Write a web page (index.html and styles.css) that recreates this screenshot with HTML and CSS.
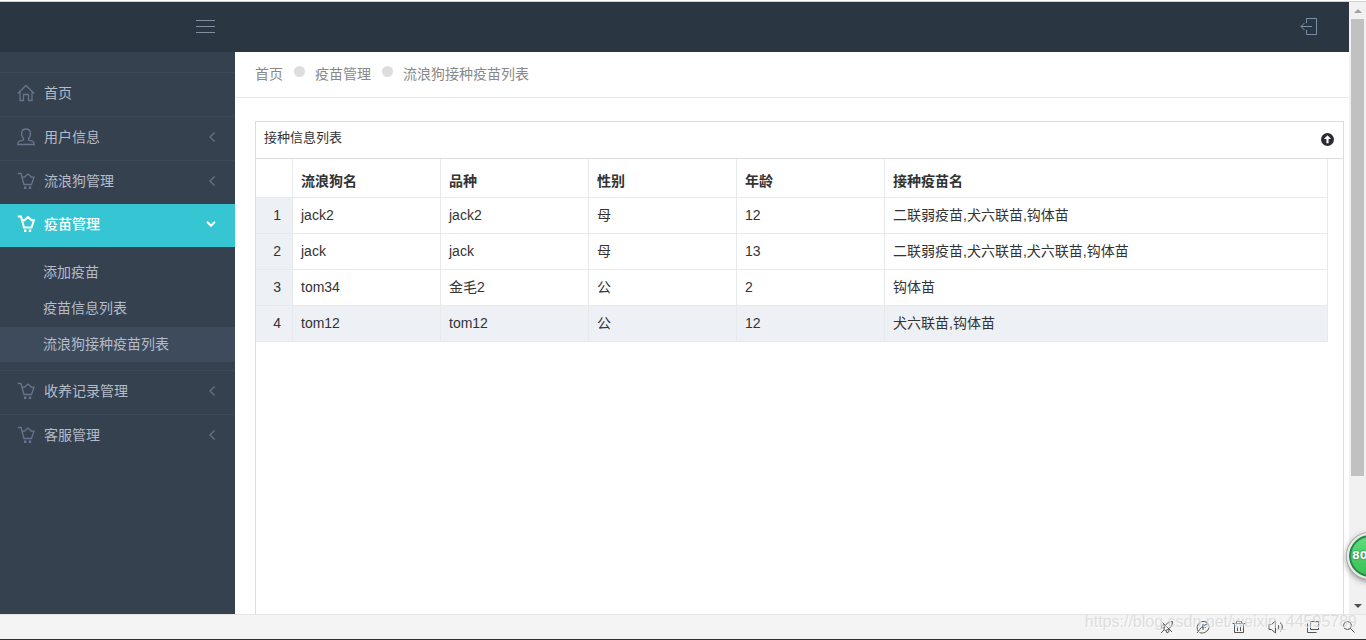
FILE: index.html
```html
<!DOCTYPE html>
<html lang="zh-CN">
<head>
<meta charset="utf-8">
<title>流浪狗接种疫苗列表</title>
<link rel="stylesheet" href="styles.css">
</head>
<body>
<svg class="defs" aria-hidden="true">
  <symbol id="cart" viewBox="0 0 18 18">
    <path d="M.8 1.500h3.200L7 12.500h7.500L17 5.200H13.500M5 5.200h3M7 5.500L11 2l4 3.500"/>
    <path class="wheels" d="M7 14.500h2.400v2.400H7zM11.800 14.500h2.400v2.400h-2.400z"/>
  </symbol>
  <symbol id="chev" viewBox="0 0 6 10"><path d="M5.500 .5L1 5l4.500 4.500"/></symbol>
</svg>
<div class="window">
  <div class="viewport">
    <div class="page">
      <header class="topbar">
        <button class="toggler" type="button" aria-label="菜单"><span></span><span></span><span></span></button>
        <a class="logout" href="#" aria-label="退出">
          <svg viewBox="0 0 18 18"><path d="M6.500 6V1.500h10v16h-10V13M12 9.500H1M4.500 6L1 9.500 4.500 13"/></svg>
        </a>
      </header>
      <div class="columns">
        <nav class="sidebar">
          <ul class="menu">
            <li class="item"><a class="link" href="#"><svg class="icon" viewBox="0 0 18 18"><path d="M.8 9.500L9 1.500l8.200 8M3 8v8.500h3.500v-6h5v6H15V8"/></svg><span>首页</span></a></li>
            <li class="item"><a class="link" href="#"><svg class="icon" viewBox="0 0 18 18"><path d="M6.500 10.500C4.500 8.500 4.500 6 4.700 4.500 5 2.500 6.500 1 9 1s4 1.500 4.300 3.500c.2 1.500.2 4-1.800 6v1.500l4 1.200c1 .5 1.800 1.500 1.800 3.300H.7c0-1.800.8-2.800 1.800-3.300l4-1.200z"/></svg><span>用户信息</span><svg class="arrow"><use href="#chev"/></svg></a></li>
            <li class="item"><a class="link" href="#"><svg class="icon"><use href="#cart"/></svg><span>流浪狗管理</span><svg class="arrow"><use href="#chev"/></svg></a></li>
            <li class="item active"><a class="link" href="#"><svg class="icon"><use href="#cart"/></svg><span>疫苗管理</span><svg class="arrow-down" viewBox="0 0 10 6"><path d="M1 .8l4 4 4-4"/></svg></a>
              <ul class="submenu">
                <li><a class="sublink" href="#">添加疫苗</a></li>
                <li><a class="sublink" href="#">疫苗信息列表</a></li>
                <li><a class="sublink current" href="#">流浪狗接种疫苗列表</a></li>
              </ul>
            </li>
            <li class="item"><a class="link" href="#"><svg class="icon"><use href="#cart"/></svg><span>收养记录管理</span><svg class="arrow"><use href="#chev"/></svg></a></li>
            <li class="item"><a class="link" href="#"><svg class="icon"><use href="#cart"/></svg><span>客服管理</span><svg class="arrow"><use href="#chev"/></svg></a></li>
          </ul>
        </nav>
        <main class="content">
          <div class="crumbs"><a href="#">首页</a><i class="dot"></i><a href="#">疫苗管理</a><i class="dot"></i><a href="#">流浪狗接种疫苗列表</a></div>
          <section class="panel">
            <div class="panel-head">
              <h1 class="panel-title">接种信息列表</h1>
              <button class="collapse" type="button" aria-label="收起"><svg viewBox="0 0 12 12"><circle cx="6" cy="6" r="6"/><path d="M6 2L9.300 5.500H7V9.500H5V5.500H2.700z"/></svg></button>
            </div>
            <div class="grid-wrap">
              <table class="grid">
                <colgroup><col class="c-num"><col class="c-std"><col class="c-std"><col class="c-std"><col class="c-std"><col></colgroup>
                <thead><tr><th></th><th>流浪狗名</th><th>品种</th><th>性别</th><th>年龄</th><th>接种疫苗名</th></tr></thead>
                <tbody>
                  <tr><td class="num">1</td><td>jack2</td><td>jack2</td><td>母</td><td>12</td><td>二联弱疫苗,犬六联苗,钩体苗</td></tr>
                  <tr><td class="num">2</td><td>jack</td><td>jack</td><td>母</td><td>13</td><td>二联弱疫苗,犬六联苗,犬六联苗,钩体苗</td></tr>
                  <tr><td class="num">3</td><td>tom34</td><td>金毛2</td><td>公</td><td>2</td><td>钩体苗</td></tr>
                  <tr class="hover"><td class="num">4</td><td>tom12</td><td>tom12</td><td>公</td><td>12</td><td>犬六联苗,钩体苗</td></tr>
                </tbody>
              </table>
            </div>
          </section>
        </main>
      </div>
    </div>
    <div class="scrollbar">
      <button class="sb-btn" type="button" aria-label="向上滚动"><svg viewBox="0 0 8 4"><path class="up" d="M0 4l4-4 4 4z"/></svg></button>
      <div class="track"><div class="thumb"></div></div>
      <button class="sb-btn" type="button" aria-label="向下滚动"><svg viewBox="0 0 8 4"><path class="down" d="M0 0h8L4 4z"/></svg></button>
    </div>
  </div>
  <footer class="statusbar">
    <button type="button" aria-label="加速"><svg viewBox="0 0 14 14"><path d="M4 9.500C4 6 7 2 12.500 1.500c0 4-3 8-7 9zM5 5H2L1.500 8 4 7.500M9 9v2.500l-2 1.500-1-2.500M2 2l10 10M4 10l-3 3"/></svg></button>
    <button type="button" aria-label="浏览"><svg viewBox="0 0 14 14"><path d="M2 11C0 7 2 2 7 1.500S14 6 12.500 9 7 14 3.500 12.500M1 13c2-2 3-5 6-7l4-2M7 4v6M4.500 7.500H10"/></svg></button>
    <button type="button" aria-label="清理"><svg viewBox="0 0 14 14"><path d="M.5 3.500h13M4.500 3V1.500h5V3M2.500 4v8.500h9V4M5.500 6.500V11M8.500 6.500V11"/></svg></button>
    <button type="button" aria-label="声音"><svg class="wide" viewBox="0 0 16 14"><path d="M1 4.500h2.500l4-3.500v12l-4-3.500H1zM10 5c1 1 1 3 0 4M12 2.500c3 2 3 7 0 9"/></svg></button>
    <button type="button" aria-label="窗口"><svg viewBox="0 0 14 14"><path d="M4.500 1.500h8v8h-8zM1.500 3.500v9h9"/></svg></button>
    <button type="button" aria-label="缩放"><svg viewBox="0 0 14 14"><circle cx="5.500" cy="5.500" r="4"/><path d="M8.500 8.500l4 4"/></svg></button>
    <span class="watermark">https://blog.csdn.net/weixin_44595789</span>
  </footer>
  <div class="ball">80</div>
</div>
</body>
</html>
```
FILE: styles.css
```css
* { box-sizing: border-box; }
body {
  margin: 0;
  font: 14px/20px "Liberation Sans", "Noto Sans CJK SC", sans-serif;
  color: #333;
  background: #fff;
}
ul { margin: 0; padding: 0; list-style: none; }
a { text-decoration: none; color: inherit; }
button { margin: 0; padding: 0; border: 0; background: none; }
svg { fill: none; stroke: currentColor; display: block; }
.defs { display: none; }

.window {
  position: relative;
  display: flex;
  flex-direction: column;
  height: 100vh;
  overflow: hidden;
  padding-top: 1px;
}
.viewport { flex: 1; display: flex; min-height: 0; border-top: 1px solid #ccd2d4; }
.page { flex: 1; min-width: 0; display: flex; flex-direction: column; }

.topbar {
  flex: none;
  height: 50px;
  display: flex;
  justify-content: space-between;
  align-items: center;
  padding: 0 31px 2px 196px;
  background: #2b3643;
}
.toggler { width: 19px; display: flex; flex-direction: column; gap: 5px; }
.toggler span { height: 1px; background: #828fa3; }
.logout { color: #7d8fa5; }
.logout svg { width: 18px; height: 18px; }

.columns { flex: 1; display: flex; min-height: 0; }
.sidebar { flex: none; width: 235px; padding-top: 20px; background: #364150; color: #b4bcc8; }
.item { border-top: 1px solid #3d4957; }
.link { display: flex; align-items: center; gap: 9px; height: 43px; padding: 0 20px 3px 17px; }
.icon { width: 18px; height: 18px; color: #67748a; stroke-width: 1.3; }
.wheels { fill: currentColor; stroke: none; }
.arrow { width: 6px; height: 10px; margin-left: auto; color: #67748a; stroke-width: 1.2; }
.arrow-down { width: 10px; height: 6px; margin-left: auto; stroke-width: 2; }
.active { border-top: 0; }
.active > .link { background: #36c6d3; color: #fff; padding-right: 19px; font-weight: 500; }
.active .icon { color: #fff; stroke-width: 2; }
.submenu { display: flex; flex-direction: column; gap: 1px; padding: 8px 0; }
.sublink { display: flex; align-items: center; height: 35px; padding: 0 0 2px 43px; }
.current { background: #3e4b5c; }

.content { flex: 1; min-width: 0; display: flex; flex-direction: column; }
.crumbs {
  flex: none;
  display: flex;
  align-items: center;
  height: 46px;
  padding: 0 20px 2px;
  border-bottom: 1px solid #e7e9eb;
  color: #888;
}
.dot { width: 11px; height: 11px; margin: 0 10px 4px 11px; border-radius: 50%; background: #ddd; }
.panel { flex: 1; display: flex; flex-direction: column; margin: 23px 5px 0 20px; border: 1px solid #ddd; border-bottom: 0; }
.panel-head {
  display: flex;
  justify-content: space-between;
  align-items: center;
  height: 37px;
  padding: 0 9px 1px 8px;
  border-bottom: 1px solid #ddd;
}
.panel-title { margin: 0; padding-bottom: 4px; font-size: 13px; font-weight: 400; }
.collapse svg { width: 13px; height: 13px; stroke: none; }
.collapse circle { fill: #2b2b33; }
.collapse path { fill: #fff; }
.grid-wrap { padding-right: 15px; }
.grid { width: 100%; table-layout: fixed; border-collapse: separate; border-spacing: 0; }
.c-num { width: 37px; }
.c-std { width: 148px; }
.grid th, .grid td {
  height: 36px;
  padding: 0 8px 2px;
  border-right: 1px solid #e7eaec;
  border-bottom: 1px solid #e7eaec;
  text-align: left;
}
.grid th { height: 39px; padding: 6px 8px 0; font-weight: 700; }
.grid .num { padding: 0 11px 2px; text-align: right; background: #edf1f5; }
.hover td { background: #edf1f6; }

.scrollbar { flex: none; width: 17px; display: flex; flex-direction: column; background: #f1f1f1; }
.sb-btn { height: 17px; display: flex; align-items: center; justify-content: center; }
.sb-btn svg { width: 8px; height: 4px; stroke: none; }
.up { fill: #a3a3a3; }
.down { fill: #505050; }
.track { flex: 1; padding: 0 2px; }
.thumb { height: 79%; background: #c1c1c1; }

.statusbar {
  position: relative;
  flex: none;
  height: 26px;
  display: flex;
  align-items: center;
  justify-content: flex-end;
  gap: 22px;
  padding-right: 10px;
  background: #f4f4f4;
  border-top: 1px solid #e5e5e5;
  border-bottom: 1px solid #2b2f38;
}
.statusbar button { color: #555; }
.statusbar svg { width: 14px; height: 14px; }
.statusbar .wide { width: 16px; }
.watermark {
  position: absolute;
  right: 9px;
  top: -3px;
  font: 16px/20px "Liberation Sans", sans-serif;
  color: #d4d4d4;
  text-shadow: 1px 1px 0 #fff;
  opacity: .7;
  pointer-events: none;
}
.ball {
  position: absolute;
  right: -27px;
  bottom: 61px;
  width: 46px;
  height: 46px;
  padding-left: 3px;
  border: 2px solid #e9e9e9;
  border-radius: 50%;
  background: linear-gradient(#62dc7c, #38bf55);
  box-shadow: inset 0 0 0 2px #25874a, 0 0 0 1px #aaa, 0 2px 6px #777;
  color: #fff;
  font: bold 11px/42px "DejaVu Sans", sans-serif;
  text-shadow: 0 0 2px #16602c;
}
```
